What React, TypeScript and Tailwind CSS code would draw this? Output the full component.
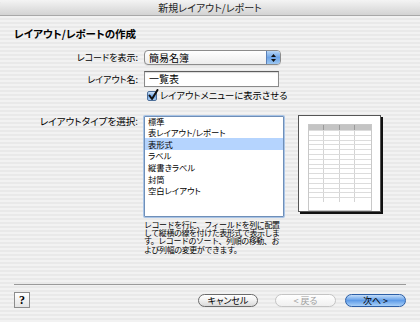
const items = ["標準", "表レイアウト/レポート", "表形式", "ラベル", "縦書きラベル", "封筒", "空白レイアウト"];

function Popup() {
  return (
    <div className="flex h-[15px] w-[137px] items-stretch rounded-[4px] border border-[#8c8c8c] bg-gradient-to-b from-white to-[#ececec] shadow-[0_1px_0_rgba(0,0,0,0.08)]">
      <div className="flex flex-1 items-center pl-[4px] text-[10px] leading-none">簡易名簿</div>
      <div className="flex w-[14px] flex-col items-center justify-center gap-[2px] rounded-r-[3px] border-l border-[#5a80b8] bg-gradient-to-b from-[#b7d6f6] via-[#6ea4e6] to-[#9cc7f2]">
        <svg width="5" height="3" viewBox="0 0 5 3"><path d="M0 3 L2.5 0 L5 3 Z" fill="#111" /></svg>
        <svg width="5" height="3" viewBox="0 0 5 3"><path d="M0 0 L2.5 3 L5 0 Z" fill="#111" /></svg>
      </div>
    </div>
  );
}

function Checkbox() {
  return (
    <div className="relative h-[10px] w-[10px] rounded-[2px] border border-[#4d6f9a] bg-gradient-to-b from-[#cfe3f8] via-[#6fa6e6] to-[#a9cdf3]">
      <svg className="absolute left-[0px] top-[-3px]" width="11" height="12" viewBox="0 0 11 12">
        <path d="M1.5 6.5 L4 10 L9.5 1" stroke="#111" strokeWidth="2" fill="none" strokeLinecap="round" strokeLinejoin="round" />
      </svg>
    </div>
  );
}

function Preview() {
  return (
    <div className="flex h-[97px] w-[83px] justify-center border border-[#555] bg-white pt-[8px] shadow-[2px_2px_0_#111]">
      <div className="flex w-[64px] flex-col border border-[#c8c8c8]">
        <div className="grid h-[5px] grid-cols-4 bg-[#c4c4c4]">
          {[0, 1, 2, 3].map((c) => (
            <div key={c} className="border-r border-[#9a9a9a] last:border-r-0" />
          ))}
        </div>
        {Array.from({ length: 15 }).map((_, r) => (
          <div key={r} className="grid h-[4.8px] grid-cols-4 border-t border-[#dcdcdc]">
            {[0, 1, 2, 3].map((c) => (
              <div key={c} className="border-r border-[#d4d4d4] last:border-r-0" />
            ))}
          </div>
        ))}
      </div>
    </div>
  );
}

export default function App() {
  return (
    <div className="flex h-[322px] w-[420px] flex-col bg-[repeating-linear-gradient(180deg,#f2f2f2_0px,#f2f2f2_2px,#e9e9e9_2px,#e9e9e9_4px)] font-['Noto_Sans_CJK_JP',sans-serif] text-black [font-feature-settings:'palt']">
      <div className="flex h-[16px] items-center justify-center rounded-t-[5px] border-b border-[#a8a8a8] bg-gradient-to-b from-[#f4f4f4] to-[#d3d3d3] text-[10px] leading-none text-[#222]">
        新規レイアウト/レポート
      </div>

      <div className="flex flex-col px-[14px] pt-[12px]">
        <div className="text-[10.5px] font-bold leading-[12px]">レイアウト/レポートの作成</div>

        <div className="mt-[10px] flex h-[15px] items-center gap-[6px]">
          <div className="w-[124px] text-right text-[9px] leading-none">レコードを表示:</div>
          <Popup />
        </div>

        <div className="mt-[6px] flex h-[16px] items-center gap-[6px]">
          <div className="w-[124px] text-right text-[9px] leading-none">レイアウト名:</div>
          <div className="flex h-[16px] w-[135px] items-center border border-[#8a8a8a] border-t-[#5e5e5e] bg-white pl-[4px] text-[10px] leading-none shadow-[inset_0_1px_1px_rgba(0,0,0,0.15)]">
            一覧表
          </div>
        </div>

        <div className="mt-[4px] flex h-[10px] items-center pl-[133px]">
          <Checkbox />
          <span className="ml-[3px] text-[9.3px] leading-none">レイアウトメニューに表示させる</span>
        </div>

        <div className="mt-[15px] flex items-start gap-[6px]">
          <div className="w-[124px] text-right text-[9.6px] leading-[10px]">レイアウトタイプを選択:</div>
          <div className="flex flex-col">
            <div className="h-[101px] w-[140px] overflow-hidden rounded-[1px] border border-[#6f8fb8] bg-white shadow-[0_0_0_1px_#a9c4e6]">
              <div className="mt-[-2px] flex flex-col">
                {items.map((t, i) => (
                  <div
                    key={t}
                    className={
                      i === 2
                        ? "flex h-[11.6px] items-center bg-[#b5d4fe] pl-[3px] text-[8.3px] leading-none"
                        : "flex h-[11.6px] items-center pl-[3px] text-[8.3px] leading-none"
                    }
                  >
                    {t}
                  </div>
                ))}
              </div>
            </div>
            <div className="mt-[4px] text-[8px] leading-[8.2px] tracking-[-0.45px] [font-feature-settings:normal]">
              レコードを行に、フィールドを列に配置
              <br />
              して縦横の線を付けた表形式で表示しま
              <br />
              す。レコードのソート、列順の移動、お
              <br />
              よび列幅の変更ができます。
            </div>
          </div>
          <div className="ml-[8px] mt-[-1px]">
            <Preview />
          </div>
        </div>
      </div>

      <div className="flex-1" />
      <div className="mx-[14px] h-px bg-[#9a9a9a]" />
      <div className="mx-[14px] mb-[14px] mt-[7px] flex h-[16px] items-center">
        <div className="flex h-[16px] w-[16px] items-center justify-center border border-[#8c8c8c] bg-gradient-to-b from-white to-[#e4e4e4] font-['Liberation_Serif',serif] text-[12px] font-bold leading-none">
          ?
        </div>
        <div className="ml-auto flex items-center">
          <div className="flex h-[13px] w-[60px] items-center justify-center rounded-full border border-[#6b6b6b] bg-gradient-to-b from-white via-[#f0f0f0] to-[#d9d9d9] text-[9px] leading-none">
            キャンセル
          </div>
          <div className="ml-[17px] flex h-[13px] w-[61px] items-center justify-center rounded-full border border-[#c4c4c4] bg-gradient-to-b from-white to-[#f0f0f0] text-[9px] leading-none text-[#a0a0a0]">
            &lt; 戻る
          </div>
          <div className="ml-[9px] flex h-[13px] w-[61px] items-center justify-center rounded-full border border-[#2d5fa6] bg-gradient-to-b from-[#c4ddf8] via-[#5f9ce8] to-[#a9d0f7] text-[9px] leading-none">
            次へ &gt;
          </div>
        </div>
      </div>
    </div>
  );
}
